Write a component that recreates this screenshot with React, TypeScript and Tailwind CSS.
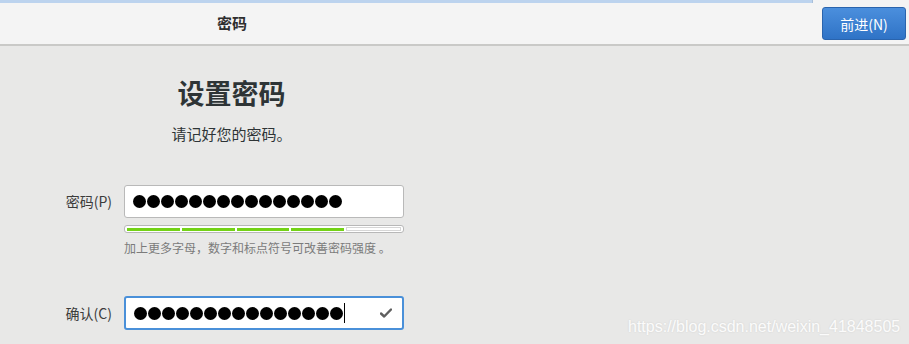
const cjk = { fontFamily: '"Noto Sans CJK SC", "Liberation Sans", sans-serif' };

function Dots({ count }: { count: number }) {
  return (
    <div className="flex gap-[1px]">
      {Array.from({ length: count }).map((_, i) => (
        <span key={i} className="block w-[13px] h-[13px] rounded-full bg-black" />
      ))}
    </div>
  );
}

function StrengthBar() {
  const filled = 4;
  return (
    <div className="w-[280px] h-[8px] mt-[7px] rounded-[3px] border border-[#b8b8b8] bg-white flex items-center gap-[2px] px-[2px]">
      {[0, 1, 2, 3, 4].map((i) => (
        <div
          key={i}
          className={
            i < filled
              ? "flex-1 h-[3px] bg-[#73d216]"
              : "flex-1 h-[4px] border border-[#d6d6d6] bg-white"
          }
        />
      ))}
    </div>
  );
}

export default function App() {
  return (
    <div className="relative w-[909px] h-[344px] overflow-hidden bg-[#e8e8e7] text-[#2e3436]" style={cjk}>
      <header className="flex flex-col h-[46px] bg-[#f4f4f4] border-b-2 border-[#c9c9c7]">
        <div className="w-[813px] h-[3px] bg-[#bcd3ee] border-r border-[#a9bfd9]" />
        <div className="flex flex-1">
          <span className="pl-[217px] pt-[12px] text-[15px] font-bold text-[#2e2e2e] leading-[16px]">密码</span>
          <button className="ml-auto mr-[3px] mt-[4px] w-[84px] h-[33px] rounded-[3px] border border-[#2a64ad] bg-gradient-to-b from-[#4b8fdd] to-[#2f73c6] text-white text-[14px] leading-none">
            前进(N)
          </button>
        </div>
      </header>

      <main className="pt-[29px]">
        <div className="w-[463px] text-center">
          <h1 className="text-[27px] leading-[36px] font-bold text-[#2e3436]">设置密码</h1>
          <p className="mt-[13px] text-[15px] leading-[20px] text-[#2e3436]">请记好您的密码。</p>
        </div>

        <div className="mt-[41px] flex gap-[12px]">
          <label className="w-[112px] h-[33px] flex items-center justify-end text-[14px] text-[#3c3c3c]">密码(P)</label>
          <div>
            <div className="w-[280px] h-[33px] rounded-[3px] border border-[#b9b9b9] bg-white flex items-center pl-[8px]">
              <Dots count={15} />
            </div>
            <StrengthBar />
            <p className="mt-[7px] text-[12px] leading-[16px] text-[#7b7b7b]">加上更多字母，数字和标点符号可改善密码强度 。</p>
          </div>
        </div>

        <div className="mt-[40px] flex gap-[12px]">
          <label className="w-[112px] h-[34px] flex items-center justify-end text-[14px] text-[#3c3c3c]">确认(C)</label>
          <div className="w-[280px] h-[34px] rounded-[3px] border-2 border-[#4a90d9] bg-white flex items-center pl-[8px] pr-[10px]">
            <Dots count={15} />
            <span className="block w-[1px] h-[20px] bg-black ml-[1px]" />
            <svg className="ml-auto" width="12" height="10" viewBox="0 0 12 10">
              <path d="M1 5.5 L4.2 8.5 L11 1.5" fill="none" stroke="#5f5f5f" strokeWidth="2.4" strokeLinecap="round" strokeLinejoin="round" />
            </svg>
          </div>
        </div>
      </main>

      <span
        className="absolute left-[628px] top-[315px] text-[16px] text-white/90 [text-shadow:0_0_2px_rgba(0,0,0,0.12)]"
        style={{ fontFamily: '"Liberation Sans", Arial, sans-serif' }}
      >
        https://blog.csdn.net/weixin_41848505
      </span>
    </div>
  );
}
